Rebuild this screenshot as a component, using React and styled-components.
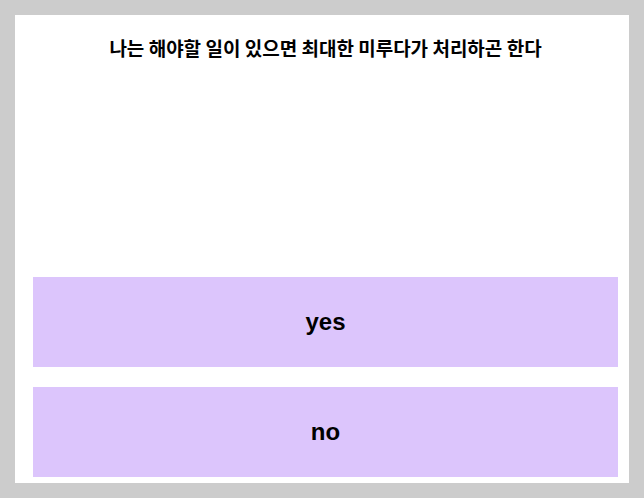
import React from "react";
import styled, { createGlobalStyle } from "styled-components";

const Global = createGlobalStyle`
  html, body { margin: 0; padding: 0; background: #cccccc; }
  body { font-family: "Noto Sans CJK KR", "Noto Sans", sans-serif; }
`;

const Page = styled.div`
  padding: 15px;
  height: 498px;
  box-sizing: border-box;
`;

const Card = styled.div`
  background: #ffffff;
  height: 468px;
  box-sizing: border-box;
  padding: 0 11px 6px 18px;
  display: flex;
  flex-direction: column;
`;

const Question = styled.h1`
  margin: 0;
  padding-top: 20px;
  font-family: "Noto Sans CJK KR", sans-serif;
  font-size: 19px;
  font-weight: 700;
  line-height: 26px;
  color: #000;
  text-align: center;
`;

const Answers = styled.div`
  margin-top: auto;
  display: flex;
  flex-direction: column;
  gap: 20px;
`;

const Answer = styled.button`
  height: 90px;
  border: none;
  background: #dcc5fc;
  font-family: "Liberation Sans", Arial, sans-serif;
  font-weight: 700;
  font-size: 24px;
  color: #000;
  cursor: pointer;
  padding: 0;
`;

export default function App() {
  return (
    <>
      <Global />
      <Page>
        <Card>
          <Question>나는 해야할 일이 있으면 최대한 미루다가 처리하곤 한다</Question>
          <Answers>
            <Answer>yes</Answer>
            <Answer>no</Answer>
          </Answers>
        </Card>
      </Page>
    </>
  );
}
